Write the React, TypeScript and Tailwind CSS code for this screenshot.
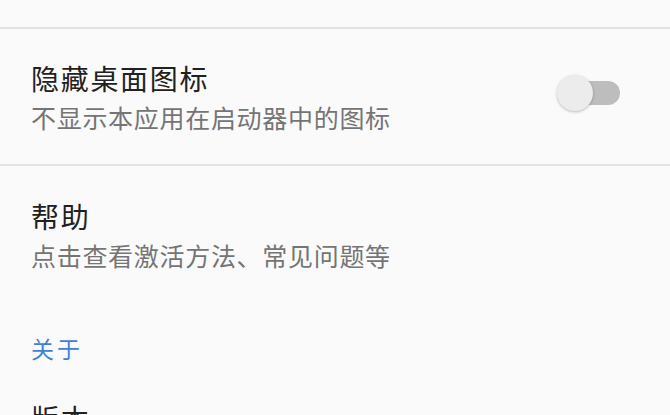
import { useState } from 'react';

const font = { fontFamily: '"Noto Sans CJK SC", "Noto Sans", sans-serif' };

function Switch({ on, onToggle }: { on: boolean; onToggle: () => void }) {
  return (
    <button onClick={onToggle} className="relative w-[63px] h-[36px] shrink-0">
      <span
        className={`absolute left-[7px] top-[6px] w-[56px] h-[24px] rounded-full ${on ? 'bg-[#9fc3f2]' : 'bg-[#bdbdbd]'}`}
      />
      <span
        className={`absolute top-0 w-[36px] h-[36px] rounded-full shadow-[0_1px_3px_rgba(0,0,0,0.25)] ${on ? 'left-[27px] bg-[#3f7fd6]' : 'left-0 bg-[#ececec]'}`}
      />
    </button>
  );
}

export default function App() {
  const [hidden, setHidden] = useState(false);

  return (
    <div className="w-[670px] h-[415px] overflow-hidden bg-[#fafafa]" style={font}>
      <div className="h-[27px]" />
      <div className="h-[2px] bg-[#e3e3e3]" />

      {/* Hide launcher icon */}
      <div className="flex items-center h-[135px] pl-[31px] pr-[50px]">
        <div className="flex-1 flex flex-col">
          <div className="text-[28px] leading-[36px] tracking-[1.7px] text-[#212121]">隐藏桌面图标</div>
          <div className="mt-[5px] text-[25px] leading-[32px] tracking-[0.7px] text-[#757575]">
            不显示本应用在启动器中的图标
          </div>
        </div>
        <div className="-mt-[3px]">
          <Switch on={hidden} onToggle={() => setHidden(!hidden)} />
        </div>
      </div>
      <div className="h-[2px] bg-[#e3e3e3]" />

      {/* Help */}
      <div className="flex flex-col pl-[31px] pt-[32px]">
        <div className="text-[28px] leading-[36px] tracking-[1.7px] text-[#212121]">帮助</div>
        <div className="mt-[5px] text-[25px] leading-[32px] tracking-[0.7px] text-[#757575]">
          点击查看激活方法、常见问题等
        </div>
      </div>

      {/* About */}
      <div className="pl-[31px] pt-[62px] text-[23px] leading-[30px] tracking-[3px] text-[#3f7fd6]">关于</div>
      <div className="pl-[31px] pt-[37px] text-[28px] leading-[36px] tracking-[1.7px] text-[#212121]">版本</div>
    </div>
  );
}
